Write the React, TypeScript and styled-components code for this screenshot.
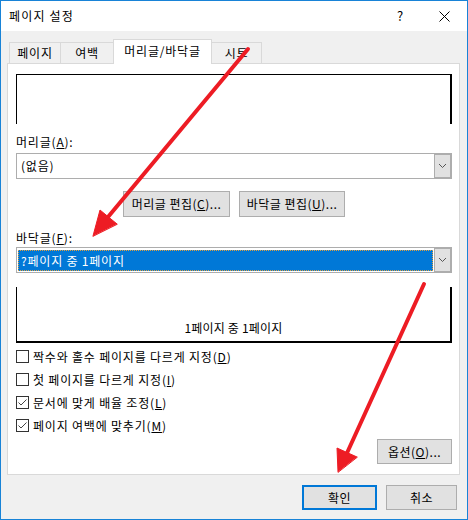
import React from "react";
import styled, { createGlobalStyle } from "styled-components";

const GlobalStyle = createGlobalStyle`
  html, body { margin: 0; padding: 0; background: #fff; }
  body {
    font-family: "Noto Sans CJK KR", "Noto Sans", sans-serif;
    font-size: 12px;
    letter-spacing: 0.8px;
    color: #000;
  }
  * { box-sizing: border-box; }
`;

const Window = styled.div`
  position: relative;
  width: 468px;
  height: 520px;
  border: 1px solid #1883d7;
  background: #f0f0f0;
  display: flex;
  flex-direction: column;
`;

const TitleBar = styled.div`
  height: 30px;
  background: #fff;
  display: flex;
  align-items: center;
  padding-left: 8px;
`;

const Title = styled.span`
  line-height: 16px;
  flex: 1;
  letter-spacing: 1.2px;
`;

const CaptionButton = styled.div<{ $w: number; $mr?: number }>`
  width: ${(p) => p.$w}px;
  height: 30px;
  margin-right: ${(p) => p.$mr ?? 0}px;
  display: flex;
  align-items: center;
  justify-content: center;
  font-size: 13px;
  line-height: 16px;
  letter-spacing: 0;
`;

const Body = styled.div`
  flex: 1;
  padding: 8px 6px 0 6px;
  display: flex;
  flex-direction: column;
`;

const TabStrip = styled.div`
  display: flex;
  align-items: flex-end;
  height: 24px;
  padding-left: 2px;
  position: relative;
  z-index: 1;
`;

const Tab = styled.div<{ $w: number; $active?: boolean }>`
  width: ${(p) => p.$w}px;
  height: ${(p) => (p.$active ? 25 : 21)}px;
  margin-bottom: ${(p) => (p.$active ? -1 : 0)}px;
  margin-left: -1px;
  padding-bottom: ${(p) => (p.$active ? 2 : 0)}px;
  border: 1px solid #d9d9d9;
  border-bottom: none;
  background: ${(p) => (p.$active ? "#fff" : "#f0f0f0")};
  position: relative;
  z-index: ${(p) => (p.$active ? 2 : 1)};
  display: flex;
  align-items: center;
  justify-content: center;
  line-height: 16px;
  white-space: nowrap;
  &:first-child { margin-left: 0; }
`;

const Panel = styled.div`
  width: 453px;
  height: 412px;
  border: 1px solid #d9d9d9;
  background: #fff;
  padding: 10px 7px 0 8px;
  display: flex;
  flex-direction: column;
`;

const HeaderPreview = styled.div`
  height: 50px;
  border: 1px solid #000;
  border-right-width: 2px;
  border-bottom: none;
`;

const FooterPreview = styled.div`
  height: 56px;
  margin-top: 14px;
  border: 1px solid #000;
  border-top: none;
  border-right-width: 2px;
  border-bottom-width: 2px;
  display: flex;
  align-items: flex-end;
  justify-content: center;
  padding-bottom: 5px;
  line-height: 16px;
  letter-spacing: 0.2px;
`;

const FieldLabel = styled.div<{ $mt: number }>`
  margin-top: ${(p) => p.$mt}px;
  line-height: 16px;
`;

const Combo = styled.div<{ $mt: number }>`
  margin-top: ${(p) => p.$mt}px;
  height: 26px;
  border: 1px solid #adadad;
  background: #fff;
  display: flex;
  align-items: stretch;
`;

const ComboValue = styled.div<{ $selected?: boolean }>`
  flex: 1;
  display: flex;
  align-items: center;
  line-height: 16px;
  white-space: nowrap;
  padding-left: ${(p) => (p.$selected ? 2 : 4)}px;
  margin: ${(p) => (p.$selected ? "2px 1px 1px 1px" : "0")};
  background: ${(p) => (p.$selected ? "#0078d7" : "transparent")};
  color: ${(p) => (p.$selected ? "#fff" : "#000")};
  border: ${(p) => (p.$selected ? "1px dotted #e0a040" : "none")};
`;

const DropButton = styled.div`
  width: 17px;
  background: #e1e1e1;
  border: 1px solid #adadad;
  display: flex;
  align-items: center;
  justify-content: center;
`;

const ButtonRow = styled.div`
  margin-top: 12px;
  display: flex;
  justify-content: center;
  gap: 9px;
`;

const PushButton = styled.button<{ $w: number; $h?: number; $default?: boolean }>`
  width: ${(p) => p.$w}px;
  height: ${(p) => p.$h ?? 26}px;
  padding: 0;
  border: ${(p) => (p.$default ? "2px solid #0078d7" : "1px solid #adadad")};
  background: #e1e1e1;
  font-family: inherit;
  font-size: 12px;
  letter-spacing: 0.5px;
  line-height: 16px;
  color: #000;
  white-space: nowrap;
  display: flex;
  align-items: center;
  justify-content: center;
`;

const CheckList = styled.div`
  margin-top: 2px;
  display: flex;
  flex-direction: column;
`;

const CheckRow = styled.div`
  height: 23px;
  display: flex;
  align-items: center;
  gap: 4px;
  line-height: 16px;
  white-space: nowrap;
`;

const CheckBox = styled.span`
  width: 13px;
  height: 13px;
  border: 1px solid #333;
  background: #fff;
  display: flex;
  align-items: center;
  justify-content: center;
  flex: none;
`;

const OptionsRow = styled.div`
  margin-top: 2px;
  display: flex;
  justify-content: flex-end;
`;

const BottomBar = styled.div`
  margin-top: 10px;
  padding-right: 4px;
  display: flex;
  justify-content: flex-end;
  gap: 9px;
`;

const Overlay = styled.svg`
  position: absolute;
  left: -1px;
  top: -1px;
  width: 468px;
  height: 520px;
  pointer-events: none;
  z-index: 10;
`;

const Chevron = () => (
  <svg width="9" height="6" viewBox="0 0 9 6">
    <polyline points="1,1 4.5,4.5 8,1" fill="none" stroke="#555" strokeWidth="1" />
  </svg>
);

const Check: React.FC<{ checked?: boolean }> = ({ checked }) => (
  <CheckBox>
    {checked && (
      <svg width="11" height="11" viewBox="0 0 11 11">
        <polyline points="1.5,5.5 4,8 9.5,2.5" fill="none" stroke="#444" strokeWidth="1" />
      </svg>
    )}
  </CheckBox>
);

const checks = [
  { label: "짝수와 홀수 페이지를 다르게 지정", key: "D", checked: false },
  { label: "첫 페이지를 다르게 지정", key: "I", checked: false },
  { label: "문서에 맞게 배율 조정", key: "L", checked: true },
  { label: "페이지 여백에 맞추기", key: "M", checked: true },
];

export default function App() {
  return (
    <>
      <GlobalStyle />
      <Window>
        <TitleBar>
          <Title>페이지 설정</Title>
          <CaptionButton $w={30} $mr={6}>?</CaptionButton>
          <CaptionButton $w={46}>
            <svg width="11" height="11" viewBox="0 0 11 11">
              <path d="M0.5 0.5 L10.5 10.5 M10.5 0.5 L0.5 10.5" stroke="#000" strokeWidth="1" fill="none" />
            </svg>
          </CaptionButton>
        </TitleBar>
        <Body>
          <TabStrip>
            <Tab $w={52}>페이지</Tab>
            <Tab $w={54}>여백</Tab>
            <Tab $w={99} $active>머리글/바닥글</Tab>
            <Tab $w={51}>시트</Tab>
          </TabStrip>
          <Panel>
            <HeaderPreview />
            <FieldLabel $mt={10}>
              머리글(<u>A</u>):
            </FieldLabel>
            <Combo $mt={3}>
              <ComboValue>(없음)</ComboValue>
              <DropButton>
                <Chevron />
              </DropButton>
            </Combo>
            <ButtonRow>
              <PushButton $w={107}>
                머리글 편집(<u>C</u>)...
              </PushButton>
              <PushButton $w={106}>
                바닥글 편집(<u>U</u>)...
              </PushButton>
            </ButtonRow>
            <FieldLabel $mt={13}>
              바닥글(<u>F</u>):
            </FieldLabel>
            <Combo $mt={1}>
              <ComboValue $selected>?페이지 중 1페이지</ComboValue>
              <DropButton>
                <Chevron />
              </DropButton>
            </Combo>
            <FooterPreview>1페이지 중 1페이지</FooterPreview>
            <CheckList>
              {checks.map((c) => (
                <CheckRow key={c.key}>
                  <Check checked={c.checked} />
                  <span>
                    {c.label}(<u>{c.key}</u>)
                  </span>
                </CheckRow>
              ))}
            </CheckList>
            <OptionsRow>
              <PushButton $w={75} $h={25}>
                옵션(<u>O</u>)...
              </PushButton>
            </OptionsRow>
          </Panel>
          <BottomBar>
            <PushButton $w={75} $h={25} $default>
              확인
            </PushButton>
            <PushButton $w={71} $h={25}>
              취소
            </PushButton>
          </BottomBar>
        </Body>
        <Overlay viewBox="0 0 468 520">
          <g fill="#ed1c24" stroke="#ed1c24" strokeLinecap="round">
            <line x1="248" y1="49" x2="108" y2="217" strokeWidth="4" />
            <polygon points="93,236 100,210 117,224" strokeWidth="1" strokeLinejoin="round" />
            <line x1="424" y1="284" x2="347" y2="453" strokeWidth="4" />
            <polygon points="338,472 337,448 357,457" strokeWidth="1" strokeLinejoin="round" />
          </g>
        </Overlay>
      </Window>
    </>
  );
}
